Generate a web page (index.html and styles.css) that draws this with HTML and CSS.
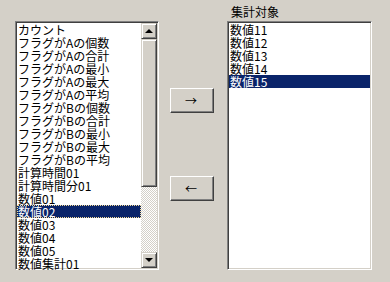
FILE: index.html
```html
<!DOCTYPE html>
<html lang="ja">

<head>
  <meta charset="utf-8">
  <title>集計対象の選択</title>
  <link rel="stylesheet" href="styles.css">
</head>

<body>
  <div class="dialog">
    <div class="source">
      <div class="listbox">
        <ul class="items">
          <li>カウント</li>
          <li>フラグがAの個数</li>
          <li>フラグがAの合計</li>
          <li>フラグがAの最小</li>
          <li>フラグがAの最大</li>
          <li>フラグがAの平均</li>
          <li>フラグがBの個数</li>
          <li>フラグがBの合計</li>
          <li>フラグがBの最小</li>
          <li>フラグがBの最大</li>
          <li>フラグがBの平均</li>
          <li>計算時間01</li>
          <li>計算時間分01</li>
          <li>数値01</li>
          <li class="selected focused">数値02</li>
          <li>数値03</li>
          <li>数値04</li>
          <li>数値05</li>
          <li>数値集計01</li>
        </ul>
        <div class="scrollbar">
          <div class="scroll-btn"><span class="tri-up"></span></div>
          <div class="thumb"></div>
          <div class="track"></div>
          <div class="scroll-btn"><span class="tri-down"></span></div>
        </div>
      </div>
    </div>

    <div class="actions">
      <button class="move">→</button>
      <button class="move">←</button>
    </div>

    <div class="target">
      <div class="caption">集計対象</div>
      <div class="listbox wide">
        <ul class="items">
          <li>数値11</li>
          <li>数値12</li>
          <li>数値13</li>
          <li>数値14</li>
          <li class="selected">数値15</li>
        </ul>
      </div>
    </div>
  </div>
</body>

</html>
```

FILE: styles.css
```css
body {
  margin: 0;
  background-color: #d4d0c8;
  font-family: "Noto Sans CJK JP", "DejaVu Sans", sans-serif;
  font-size: 12px;
  color: #000;
}

.dialog {
  display: flex;
  align-items: flex-start;
  padding: 5px 0 0 15px;
}

.source {
  margin-top: 16px;
}

.listbox {
  display: flex;
  width: 144px;
  height: 249px;
  box-sizing: border-box;
  background: #fff;
  border: 1px solid;
  border-color: #808080 #fff #fff #808080;
  box-shadow: inset 1px 1px #404040, inset -1px -1px #d4d0c8;
  padding: 1px;
}

.listbox.wide {
  width: 145px;
}

.items {
  flex: 1;
  list-style: none;
  margin: 0;
  padding: 0;
}

.items li {
  height: 13px;
  line-height: 13px;
  padding-left: 1px;
  white-space: nowrap;
  box-sizing: border-box;
}

.items li.selected {
  background: #0a246a;
  color: #fff;
}

.items li.focused {
  outline: 1px dotted #f5db95;
  outline-offset: -1px;
}

.scrollbar {
  width: 16px;
  display: flex;
  flex-direction: column;
}

.scroll-btn,
.thumb {
  box-sizing: border-box;
  background: #d4d0c8;
  border: 1px solid;
  border-color: #d4d0c8 #404040 #404040 #d4d0c8;
  box-shadow: inset 1px 1px #fff, inset -1px -1px #808080;
}

.scroll-btn {
  height: 16px;
  display: flex;
  align-items: center;
  justify-content: center;
}

.thumb {
  height: 148px;
}

.track {
  flex: 1;
  background: repeating-conic-gradient(#fff 0 25%, #d4d0c8 0 50%) 0 0 / 2px 2px;
}

.tri-up,
.tri-down {
  width: 0;
  height: 0;
  border-left: 4px solid transparent;
  border-right: 4px solid transparent;
}

.tri-up {
  border-bottom: 4px solid #000;
}

.tri-down {
  border-top: 4px solid #000;
}

.actions {
  display: flex;
  flex-direction: column;
  gap: 63px;
  margin: 83px 13px 0 11px;
}

.move {
  width: 44px;
  height: 25px;
  padding: 0 2px 0 0;
  background: #d4d0c8;
  border: 1px solid;
  border-color: #fff #404040 #404040 #fff;
  box-shadow: inset -1px -1px #808080;
  font-family: "Noto Sans CJK JP", sans-serif;
  font-size: 12px;
  line-height: 1;
  color: #000;
}

.caption {
  height: 16px;
  line-height: 14px;
  padding-left: 4px;
}
```
